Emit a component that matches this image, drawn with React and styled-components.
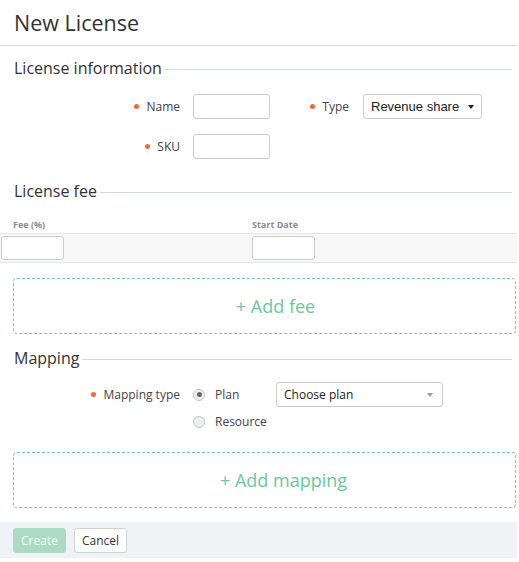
import React from "react";
import styled, { createGlobalStyle } from "styled-components";

const Global = createGlobalStyle`
  html, body { margin: 0; padding: 0; background: #fff; }
  body { font-family: "Open Sans", "Liberation Sans", sans-serif; color: #333; }
  * { box-sizing: border-box; }
`;

const Page = styled.div`
  width: 517px;
  display: flex;
  flex-direction: column;
`;

const TitleBar = styled.div`
  height: 46px;
  padding: 8px 0 0 14px;
  border-bottom: 1px solid #dcdcdc;
`;

const Title = styled.h1`
  margin: 0;
  font-size: 21.5px;
  font-weight: 400;
  line-height: 30px;
  color: #333;
`;

const SectionHeading = styled.div`
  display: flex;
  align-items: center;
  height: 20px;
  padding: 0 5px 0 14px;
  margin-top: ${(p) => p.$mt || 14}px;
  font-size: 16px;
  line-height: 20px;
  color: #333;
  &::after {
    content: "";
    flex: 1;
    margin-left: 3px;
    margin-top: 2px;
    border-top: 1px solid #d6dbe0;
  }
`;

const FormRow = styled.div`
  display: flex;
  align-items: flex-start;
  margin-top: ${(p) => p.$mt || 0}px;
`;

const LabelCell = styled.div`
  width: ${(p) => p.$w}px;
  height: 25px;
  display: flex;
  align-items: center;
  justify-content: flex-end;
  padding-right: ${(p) => p.$pr || 0}px;
  font-size: 12px;
  color: #444;
  flex-shrink: 0;
`;

const Bullet = styled.span`
  width: 5px;
  height: 5px;
  border-radius: 50%;
  background: #f26a35;
  margin-right: 7px;
`;

const TextInput = styled.div`
  width: ${(p) => p.$w}px;
  height: ${(p) => p.$h || 25}px;
  border: 1px solid #c9cdd1;
  border-radius: 3px;
  background: #fff;
  flex-shrink: 0;
`;

const Select = styled.div`
  width: ${(p) => p.$w}px;
  height: 25px;
  border: 1px solid #c9cdd1;
  border-radius: 3px;
  background: #fff;
  display: flex;
  align-items: center;
  justify-content: space-between;
  padding: 0 ${(p) => p.$pr}px 0 ${(p) => p.$pl}px;
  font-family: ${(p) => (p.$native ? '"Liberation Sans", Arial, sans-serif' : '"Open Sans", sans-serif')};
  font-size: ${(p) => (p.$native ? 13 : 12)}px;
  color: #222;
  flex-shrink: 0;
`;

const Caret = styled.span`
  width: 0;
  height: 0;
  border-left: 3px solid transparent;
  border-right: 3px solid transparent;
  border-top: ${(p) => p.$s || 5}px solid ${(p) => p.$c};
`;

const Spacer = styled.div`
  width: ${(p) => p.$w}px;
  flex-shrink: 0;
`;

const Table = styled.div`
  margin-top: 13px;
  display: flex;
  flex-direction: column;
`;

const HeadRow = styled.div`
  display: grid;
  grid-template-columns: 251px 1fr;
  height: 19px;
`;

const HeadCell = styled.div`
  padding: 2px 0 0 13px;
  font-size: 9px;
  font-weight: 700;
  color: #8a8d90;
  line-height: 17px;
  &:nth-child(2) { padding-left: 1px; }
`;

const BodyRow = styled.div`
  display: grid;
  grid-template-columns: 251px 1fr;
  background: #f8f8f8;
  border-top: 1px solid #e2e4e6;
  border-bottom: 1px solid #e2e4e6;
  padding: 2px 0 2px 1px;
`;

const BodyCell = styled.div`
  display: flex;
`;

const AddBox = styled.div`
  margin: ${(p) => p.$mt}px 1px 0 13px;
  height: 56px;
  border: 1px dashed #74cf9f;
  border-radius: 4px;
  display: flex;
  align-items: center;
  justify-content: center;
  padding-left: ${(p) => p.$shift}px;
  font-size: 18px;
  color: #6cc79b;
`;

const RadioGroup = styled.div`
  display: flex;
  flex-direction: column;
  gap: 2px;
`;

const RadioLine = styled.div`
  display: flex;
  align-items: center;
  height: 25px;
`;

const RadioOption = styled.label`
  display: flex;
  align-items: center;
  width: 83px;
  font-size: 12px;
  color: #444;
`;

const RadioCircle = styled.span`
  width: 12px;
  height: 12px;
  border-radius: 50%;
  border: 1px solid #c4c7ca;
  background: #eceeef;
  margin-right: 10px;
  display: flex;
  align-items: center;
  justify-content: center;
  &::after {
    content: "";
    width: 5px;
    height: 5px;
    border-radius: 50%;
    background: ${(p) => (p.$checked ? "#666" : "transparent")};
  }
`;

const Footer = styled.div`
  margin-top: 14px;
  height: 36px;
  background: #eff3f6;
  display: flex;
  align-items: center;
  gap: 8px;
  padding-left: 13px;
`;

const Button = styled.button`
  height: 25px;
  width: 53px;
  border-radius: 3px;
  font-family: "Open Sans", sans-serif;
  font-size: 12px;
  padding: 0;
  border: 1px solid ${(p) => (p.$primary ? "#abdcc3" : "#cfd3d6")};
  background: ${(p) => (p.$primary ? "#abdcc3" : "#fff")};
  color: ${(p) => (p.$primary ? "#f4fbf7" : "#333")};
`;

export default function App() {
  return (
    <>
      <Global />
      <Page>
        <TitleBar>
          <Title>New License</Title>
        </TitleBar>

        <SectionHeading $mt={12}>License information</SectionHeading>
        <FormRow $mt={16}>
          <LabelCell $w={180}>
            <Bullet />
            Name
          </LabelCell>
          <Spacer $w={13} />
          <TextInput $w={77} />
          <LabelCell $w={93} $pr={14}>
            <Bullet />
            Type
          </LabelCell>
          <Select $w={119} $pl={7} $pr={7} $native>
            Revenue share
            <Caret $c="#222" $s={4} />
          </Select>
        </FormRow>
        <FormRow $mt={15}>
          <LabelCell $w={180}>
            <Bullet />
            SKU
          </LabelCell>
          <Spacer $w={13} />
          <TextInput $w={77} />
        </FormRow>

        <SectionHeading $mt={22}>License fee</SectionHeading>
        <Table>
          <HeadRow>
            <HeadCell>Fee (%)</HeadCell>
            <HeadCell>Start Date</HeadCell>
          </HeadRow>
          <BodyRow>
            <BodyCell>
              <TextInput $w={63} $h={24} />
            </BodyCell>
            <BodyCell>
              <TextInput $w={63} $h={24} />
            </BodyCell>
          </BodyRow>
        </Table>

        <AddBox $mt={15} $shift={22}>+ Add fee</AddBox>

        <SectionHeading $mt={14}>Mapping</SectionHeading>
        <FormRow $mt={14}>
          <LabelCell $w={180}>
            <Bullet />
            Mapping type
          </LabelCell>
          <Spacer $w={13} />
          <RadioGroup>
            <RadioLine>
              <RadioOption>
                <RadioCircle $checked />
                Plan
              </RadioOption>
              <Select $w={167} $pl={7} $pr={9}>
                Choose plan
                <Caret $c="#999" $s={4} />
              </Select>
            </RadioLine>
            <RadioLine>
              <RadioOption>
                <RadioCircle />
                Resource
              </RadioOption>
            </RadioLine>
          </RadioGroup>
        </FormRow>

        <AddBox $mt={18} $shift={38}>+ Add mapping</AddBox>

        <Footer>
          <Button $primary>Create</Button>
          <Button>Cancel</Button>
        </Footer>
      </Page>
    </>
  );
}
